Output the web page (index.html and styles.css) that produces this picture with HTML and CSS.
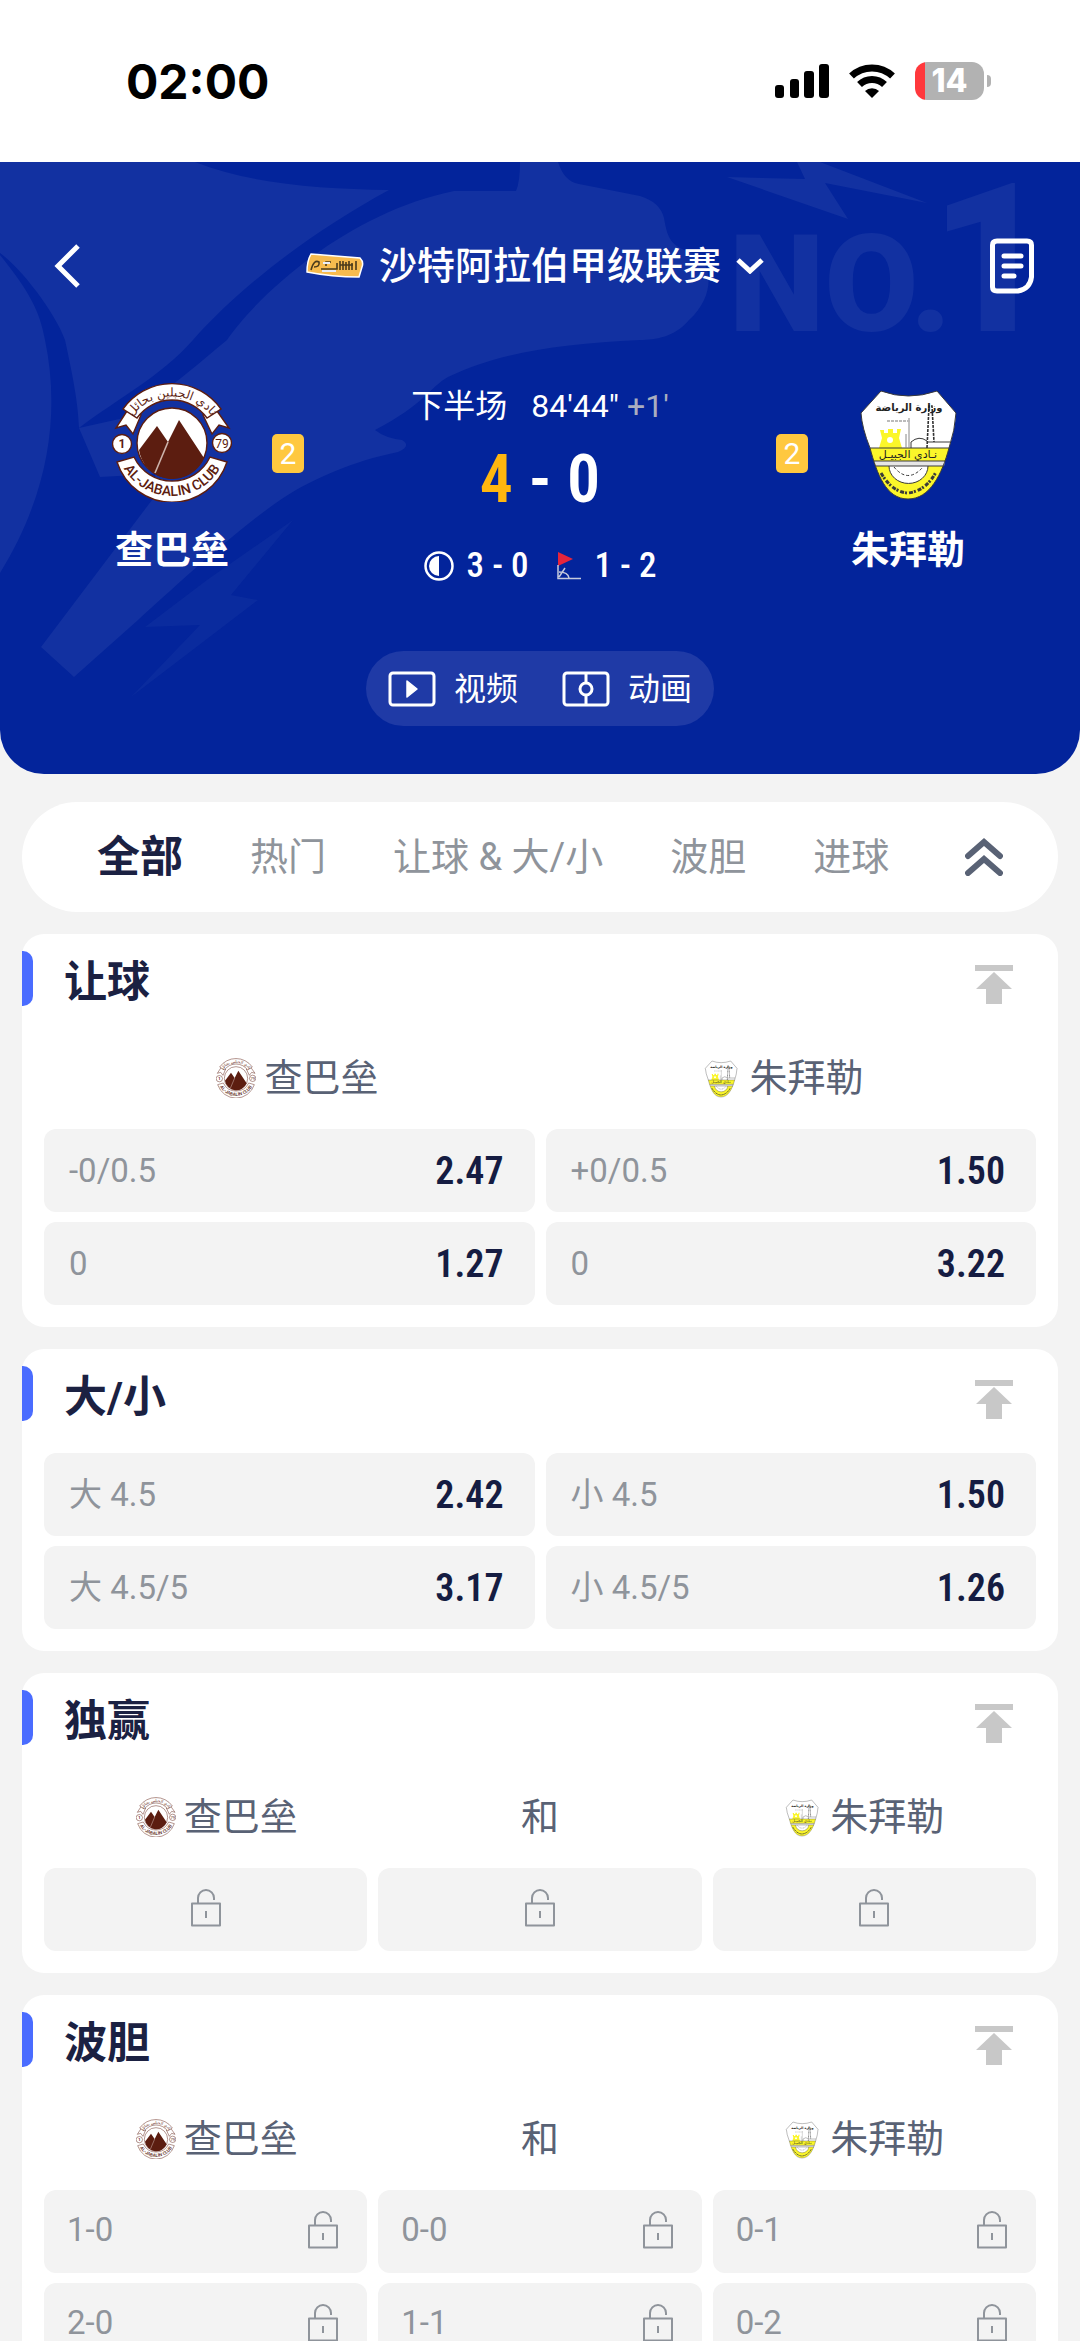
FILE: index.html
```html
<!DOCTYPE html>
<html lang="zh-CN">

<head>
    <meta charset="UTF-8">
    <meta name="viewport" content="width=device-width, initial-scale=1.0">
    <title>沙特阿拉伯甲级联赛</title>
    <link rel="stylesheet" href="styles.css">
</head>

<body>
    <!-- Shared icons -->
    <svg class="sprite" aria-hidden="true">
        <symbol id="logo-home" viewBox="0 0 120 120">
            <path id="home-top" d="M14 45 A50 50 0 0 1 106 45" fill="none" />
            <path id="home-bottom" d="M7 76 A56 56 0 0 0 113 76" fill="none" />
            <g fill="#fff" stroke="#5c1d10" stroke-width="1.4">
                <path d="M15 29 L4 46 L14 43 L21 52 L29 33 Z" />
                <path d="M105 29 L117 46 L107 43 L100 52 L91 33 Z" />
                <path d="M11 27 A60 60 0 0 1 109 27 L95 36 A43 43 0 0 0 25 36 Z" />
                <path d="M5 80 A58 59 0 0 0 115 80 L98 75 A42 42 0 0 1 22 75 Z" />
                <circle cx="10" cy="62" r="9.5" />
                <circle cx="110" cy="61" r="9.5" />
                <circle cx="60" cy="61" r="35" />
            </g>
            <path d="M27 68 L45 44 L56 60 L67 38 L92 76 A34 34 0 0 1 27 68 Z" fill="#5c1d10" />
            <path d="M56 60 L43 91" stroke="#cdb4ac" stroke-width="1.6" />
            <g fill="#5c1d10" font-family="Roboto, sans-serif" text-anchor="middle">
                <text x="10" y="66" font-size="12" font-weight="700">1</text>
                <text x="110" y="66" font-size="12">79</text>
                <text font-size="14" font-weight="500"><textPath href="#home-bottom" startOffset="50%">AL-JABALIN CLUB</textPath></text>
                <text font-size="12" font-family="DejaVu Sans, sans-serif"><textPath href="#home-top" startOffset="50%">نادي الجبلين بحائل</textPath></text>
            </g>
        </symbol>

        <symbol id="logo-away" viewBox="0 0 120 120">
            <path d="M33 9 Q60 19 89 9 L108 31 Q107 48 101 66 H22 Q14 46 13 31 Z" fill="#fff" />
            <path d="M22 66 H101 C94 92 82 117 60 117 C38 117 29 92 22 66 Z" fill="#fbf62a" />
            <path d="M31 66 L34 56 L32 48 H36 V51 H40 V47 H45 V51 H49 V47 H53 L51 56 L54 66 Z" fill="#fbf62a" />
            <circle cx="42" cy="58" r="3" fill="#fff" />
            <path d="M26 79 H97 L96 84 H28 Z" fill="#e6e6e6" />
            <path d="M41 84 A19 17 0 0 0 80 84 Z" fill="#fff" />
            <g fill="none" stroke="#3a3a3a" stroke-width="1">
                <path d="M33 9 Q60 19 89 9 L108 31 Q107 48 101 66 C94 92 82 117 60 117 C38 117 29 92 22 66 Q14 46 13 31 Z" />
                <path d="M22 66 H101 M26 79 H97 M28 84 H96 M80 60 H102 M63 66 V60 Q71 53 79 59 M41 84 A19 17 0 0 0 80 84" />
                <path d="M46 85 Q60 102 75 85" stroke-dasharray="3 2" />
                <path d="M33 91 Q44 110 60 111 Q78 109 88 90" stroke-width="3" stroke-dasharray="4 1 2 2" />
            </g>
            <path d="M79 66 L81 24 L84 24 L86 60" fill="none" stroke="#333" stroke-width="1.6" stroke-dasharray="3 1" />
            <path d="M61 36 V66 M58 52 V66" stroke="#888" stroke-width="1" />
            <path d="M39 39 H62" stroke="#bbb" stroke-width="2" stroke-dasharray="3 1" />
            <g fill="#222" font-family="DejaVu Sans, sans-serif" text-anchor="middle">
                <text x="61" y="29" font-size="10" font-weight="700">وزارة الرياضة</text>
                <text x="60" y="76" font-size="11">نـادي الجبيـل</text>
            </g>
        </symbol>

        <symbol id="icon-top" viewBox="0 0 40 40">
            <path d="M1 1 H39 V7 H1 Z M20 8 L38 25 H28 V40 H12 V25 H2 Z" fill="#c8c8c8" />
        </symbol>

        <symbol id="icon-lock" viewBox="0 0 30 38">
            <path d="M7 14 V9 A8 8 0 0 1 23 9 V11 M1 14.5 H29 V36.5 H1 Z M15 22 V29" fill="none" stroke="#8f949b" stroke-width="2" stroke-linejoin="round" />
        </symbol>
    </svg>

    <div class="app">
        <div class="status-bar">
            <span class="time">02:00</span>
            <div class="status-icons">
                <svg width="54" height="34" viewBox="0 0 54 34">
                    <rect x="0" y="21" width="9" height="13" rx="3" />
                    <rect x="15" y="15" width="9" height="19" rx="3" />
                    <rect x="29" y="7" width="10" height="27" rx="3" />
                    <rect x="44" y="0" width="10" height="34" rx="3" />
                </svg>
                <svg width="46" height="34" viewBox="0 0 46 34">
                    <path d="M2.5 12 A30 30 0 0 1 43.5 12" fill="none" stroke="#000" stroke-width="7" />
                    <path d="M10.5 20.5 A18 18 0 0 1 35.5 20.5" fill="none" stroke="#000" stroke-width="7" />
                    <path d="M23 34 L16 27 A10 10 0 0 1 30 27 Z" />
                </svg>
                <div class="battery">14</div>
            </div>
        </div>

        <header class="match">
            <svg class="match-bg" viewBox="0 0 1080 612" preserveAspectRatio="xMidYMin slice" aria-hidden="true">
                <g fill="#1231a1">
                    <path d="M0 0 H195 C250 22 320 27 389 28 C310 71 240 125 193 178 C160 215 120 235 79 266 C78 240 73 215 65 178 C55 150 20 105 0 91 Z" />
                    <path d="M0 93 C30 130 40 150 45 178 C60 250 50 330 0 411 Z" />
                    <path d="M520 0 H558 C562 12 568 20 579 22 L640 34 Q660 40 664 56 C668 80 672 84 695 92 C714 104 714 135 689 158 C675 175 655 178 640 178 C560 182 500 190 448 215 C430 225 425 242 375 268 Q385 276 402 278 Q412 284 398 290 C350 300 320 315 296 328 C250 355 180 420 138 458 L74 515 L41 485 L158 330 L155 312 L100 315 L79 266 L124 256 C170 228 200 200 227 178 C260 130 350 50 454 29 H516 Q520 20 520 0 Z" />
                    <path d="M797 0 H820 L927 41 L825 21 L848 57 L727 15 L805 17 Z" />
                    <path d="M293 358 L231 433 L258 438 L131 535 L200 463 L145 465 L207 418 Z" opacity="0.5" />
                </g>
                <g class="match-no">
                    <text x="729" y="169" font-size="136">NO.</text>
                    <text x="930" y="169" font-size="208">1</text>
                </g>
            </svg>

            <div class="league-bar">
                <button class="icon-btn" type="button" aria-label="返回">
                    <svg width="26" height="44" viewBox="0 0 26 44">
                        <path d="M24 2 L4 22 L24 42" fill="none" stroke="#fff" stroke-width="5" />
                    </svg>
                </button>
                <button class="league" type="button">
                    <svg width="58" height="26" viewBox="0 0 58 26">
                        <path d="M5 1 L54 5 Q58 9 56 14 L53 24 Q26 24 1 19 Q1 8 5 1 Z" fill="#f7bb4e" stroke="#fff" stroke-width="1.5" />
                        <path d="M5 17 Q8 6 13 9 Q14 14 8 14 M15 16 H31 V10 M25 9 H20 V13 M34 8 V17 M37 8 V17 M40 9 V17 M43 8 V17 M46 10 V17 M50 8 V17 M34 12 H47" fill="none" stroke="#4a3b1c" stroke-width="1.6" />
                        <path d="M17 10 H24 M16 18 H30" stroke="#e9edf8" stroke-width="2" />
                    </svg>
                    <span>沙特阿拉伯甲级联赛</span>
                    <svg width="28" height="16" viewBox="0 0 28 16">
                        <path d="M2 2 L14 13 L26 2" fill="none" stroke="#fff" stroke-width="5" />
                    </svg>
                </button>
                <button class="icon-btn" type="button" aria-label="注单">
                    <svg width="44" height="56" viewBox="0 0 44 56">
                        <path d="M7 3 H37 Q41.5 3 41.5 7 V39 Q40 51 28 53 H7 Q2.5 53 2.5 49 V7 Q2.5 3 7 3 Z" fill="none" stroke="#fff" stroke-width="5" />
                        <path d="M14 18 H31 M14 28 H31 M14 38 H24" stroke="#fff" stroke-width="5" stroke-linecap="round" />
                    </svg>
                </button>
            </div>

            <div class="scoreboard">
                <div class="team">
                    <svg class="team-logo"><use href="#logo-home" /></svg>
                    <span class="team-name">查巴垒</span>
                </div>
                <span class="card-count">2</span>
                <div class="score-info">
                    <div class="clock">
                        <span class="half">下半场</span>
                        <span>84'44"</span>
                        <span class="extra">+1'</span>
                    </div>
                    <div class="score"><span class="leading">4</span><span>-</span><span>0</span></div>
                    <div class="stats">
                        <svg width="30" height="30" viewBox="0 0 30 30">
                            <circle cx="15" cy="15" r="13.5" fill="none" stroke="#fff" stroke-width="2.5" />
                            <path d="M15 5 A10 10 0 0 0 15 25 Z" fill="#fff" />
                        </svg>
                        <span class="stat">3 - 0</span>
                        <svg width="26" height="28" viewBox="0 0 26 28">
                            <path d="M2 0 L17 7 L2 14 Z" fill="#e5253c" />
                            <path d="M2 13 V26.5 H25 M3 20 Q12 20 13 26 M3 25 L9 16" fill="none" stroke="#c5cadd" stroke-width="1.5" />
                        </svg>
                        <span class="stat">1 - 2</span>
                    </div>
                </div>
                <span class="card-count">2</span>
                <div class="team">
                    <svg class="team-logo"><use href="#logo-away" /></svg>
                    <span class="team-name">朱拜勒</span>
                </div>
            </div>

            <div class="media">
                <button type="button">
                    <svg width="48" height="36" viewBox="0 0 48 36">
                        <rect x="2" y="2" width="44" height="32" rx="3" fill="none" stroke="#fff" stroke-width="3" />
                        <path d="M19 10 L29 18 L19 26 Z" fill="#fff" stroke="#fff" stroke-width="1.5" stroke-linejoin="round" />
                    </svg>
                    视频
                </button>
                <button type="button">
                    <svg width="48" height="36" viewBox="0 0 48 36">
                        <rect x="2" y="2" width="44" height="32" rx="3" fill="none" stroke="#fff" stroke-width="3" />
                        <path d="M24 2 V12 M24 24 V34" stroke="#fff" stroke-width="3" />
                        <circle cx="24" cy="18" r="6" fill="none" stroke="#fff" stroke-width="3" />
                    </svg>
                    动画
                </button>
            </div>
        </header>

        <nav class="tabs">
            <button class="tab active" type="button">全部</button>
            <button class="tab" type="button">热门</button>
            <button class="tab" type="button">让球 &amp; 大/小</button>
            <button class="tab" type="button">波胆</button>
            <button class="tab" type="button">进球</button>
            <button class="collapse" type="button" aria-label="收起">
                <svg width="38" height="38" viewBox="0 0 38 38">
                    <path d="M3 18 L19 4 L35 18 M3 35 L19 21 L35 35" fill="none" stroke="#596275" stroke-width="6" stroke-linecap="round" />
                </svg>
            </button>
        </nav>

        <main class="markets">
            <!-- Handicap -->
            <section class="market">
                <div class="market-head">
                    <h2>让球</h2>
                    <button class="pin" type="button" aria-label="置顶"><svg><use href="#icon-top" /></svg></button>
                </div>
                <div class="market-teams">
                    <span><svg><use href="#logo-home" /></svg>查巴垒</span>
                    <span><svg><use href="#logo-away" /></svg>朱拜勒</span>
                </div>
                <div class="odds">
                    <button type="button">-0/0.5 <b>2.47</b></button>
                    <button type="button">+0/0.5 <b>1.50</b></button>
                    <button type="button">0 <b>1.27</b></button>
                    <button type="button">0 <b>3.22</b></button>
                </div>
            </section>

            <!-- Over / under -->
            <section class="market">
                <div class="market-head">
                    <h2>大/小</h2>
                    <button class="pin" type="button" aria-label="置顶"><svg><use href="#icon-top" /></svg></button>
                </div>
                <div class="odds">
                    <button type="button">大 4.5 <b>2.42</b></button>
                    <button type="button">小 4.5 <b>1.50</b></button>
                    <button type="button">大 4.5/5 <b>3.17</b></button>
                    <button type="button">小 4.5/5 <b>1.26</b></button>
                </div>
            </section>

            <!-- Match winner -->
            <section class="market">
                <div class="market-head">
                    <h2>独赢</h2>
                    <button class="pin" type="button" aria-label="置顶"><svg><use href="#icon-top" /></svg></button>
                </div>
                <div class="market-teams">
                    <span><svg><use href="#logo-home" /></svg>查巴垒</span>
                    <span>和</span>
                    <span><svg><use href="#logo-away" /></svg>朱拜勒</span>
                </div>
                <div class="odds three locked only-lock">
                    <button type="button" aria-label="查巴垒"><svg><use href="#icon-lock" /></svg></button>
                    <button type="button" aria-label="和"><svg><use href="#icon-lock" /></svg></button>
                    <button type="button" aria-label="朱拜勒"><svg><use href="#icon-lock" /></svg></button>
                </div>
            </section>

            <!-- Correct score -->
            <section class="market">
                <div class="market-head">
                    <h2>波胆</h2>
                    <button class="pin" type="button" aria-label="置顶"><svg><use href="#icon-top" /></svg></button>
                </div>
                <div class="market-teams">
                    <span><svg><use href="#logo-home" /></svg>查巴垒</span>
                    <span>和</span>
                    <span><svg><use href="#logo-away" /></svg>朱拜勒</span>
                </div>
                <div class="odds three locked">
                    <button type="button">1-0 <svg><use href="#icon-lock" /></svg></button>
                    <button type="button">0-0 <svg><use href="#icon-lock" /></svg></button>
                    <button type="button">0-1 <svg><use href="#icon-lock" /></svg></button>
                    <button type="button">2-0 <svg><use href="#icon-lock" /></svg></button>
                    <button type="button">1-1 <svg><use href="#icon-lock" /></svg></button>
                    <button type="button">0-2 <svg><use href="#icon-lock" /></svg></button>
                </div>
            </section>
        </main>
    </div>
</body>

</html>
```
FILE: styles.css
```css
* {
    box-sizing: border-box;
}

body {
    margin: 0;
    background-color: #f3f3f3;
    font-family: Roboto, "Noto Sans CJK SC", sans-serif;
    color: #1b2142;
}

button {
    border: none;
    background: none;
    padding: 0;
    margin: 0;
    font: inherit;
    color: inherit;
    cursor: pointer;
}

svg {
    display: block;
    flex: none;
}

.sprite {
    display: none;
}

.app {
    height: 100vh;
    overflow: hidden;
}

/* Status bar */
.status-bar {
    display: flex;
    align-items: center;
    justify-content: space-between;
    height: 162px;
    padding: 0 96px 0 126px;
    background-color: #fff;
}

.time {
    font-family: Inter, sans-serif;
    font-size: 48px;
    font-weight: 700;
    color: #000;
}

.status-icons {
    display: flex;
    align-items: center;
    gap: 20px;
}

.battery {
    position: relative;
    width: 69px;
    height: 38px;
    border-radius: 12px;
    background: linear-gradient(to right, #ff383c 10px, #b2b2b2 10px);
    color: #fff;
    font-family: Inter, sans-serif;
    font-size: 32px;
    font-weight: 800;
    line-height: 38px;
    text-align: center;
}

.battery::after {
    content: "";
    position: absolute;
    top: 13px;
    right: -7px;
    width: 4px;
    height: 12px;
    border-radius: 0 6px 6px 0;
    background-color: #b2b2b2;
}

/* Match header */
.match {
    position: relative;
    padding: 72px 0 48px;
    border-radius: 0 0 44px 44px;
    background-color: #03249b;
    color: #fff;
    overflow: hidden;
}

.match > div {
    position: relative;
}

.match-bg {
    position: absolute;
    top: 0;
    left: 0;
    width: 100%;
    height: 100%;
}

.match-no {
    fill: #1231a1;
    font-family: Roboto, sans-serif;
    font-weight: 900;
}

.league-bar {
    display: flex;
    align-items: center;
    justify-content: space-between;
    height: 64px;
    padding: 0 46px 0 54px;
}

.league {
    display: flex;
    align-items: center;
    gap: 15px;
    font-size: 38px;
    font-weight: 500;
    line-height: 56px;
}

.scoreboard {
    display: flex;
    align-items: flex-start;
    gap: 10px;
    padding: 84px 82px 0;
}

.team {
    display: flex;
    flex-direction: column;
    align-items: center;
    gap: 20px;
    width: 180px;
}

.team-logo {
    width: 120px;
    height: 120px;
}

.team-name {
    font-size: 38px;
    font-weight: 700;
    line-height: 56px;
}

.card-count {
    width: 32px;
    height: 39px;
    margin-top: 52px;
    border-radius: 5px;
    background-color: #ffc83f;
    font-size: 30px;
    line-height: 39px;
    text-align: center;
}

.score-info {
    flex: 1;
    display: flex;
    flex-direction: column;
    align-items: center;
}

.clock {
    display: flex;
    align-items: center;
    gap: 8px;
    font-size: 32px;
    line-height: 48px;
}

.clock .half {
    margin-right: 16px;
}

.clock .extra {
    color: #a9adbf;
}

.score {
    display: flex;
    gap: 16px;
    margin-top: 10px;
    font-family: "Roboto Condensed", Roboto, sans-serif;
    font-size: 66px;
    font-weight: 600;
    line-height: 80px;
}

.score .leading {
    color: #ffb60f;
}

.stats {
    display: flex;
    align-items: center;
    gap: 13px;
    margin-top: 24px;
}

.stat {
    margin-right: 14px;
    font-family: "Roboto Condensed", Roboto, sans-serif;
    font-size: 35px;
    font-weight: 500;
    line-height: 44px;
}

.stat:last-child {
    margin-right: 0;
}

.media {
    display: flex;
    gap: 44px;
    width: max-content;
    margin: 63px auto 0;
    padding: 0 22px;
    border-radius: 38px;
    background-color: #1f3aa6;
}

.media button {
    display: flex;
    align-items: center;
    gap: 18px;
    height: 75px;
    font-size: 32px;
    line-height: 48px;
}

/* Category tabs */
.tabs {
    display: flex;
    align-items: center;
    gap: 67px;
    height: 110px;
    margin: 28px 22px 22px;
    padding: 0 55px 0 75px;
    border-radius: 55px;
    background-color: #fff;
}

.tab {
    color: #8f949b;
    font-size: 38px;
    line-height: 56px;
    white-space: nowrap;
}

.tab.active {
    color: #1b2142;
    font-size: 43px;
    font-weight: 700;
}

.collapse {
    margin-left: auto;
}

/* Market cards */
.market {
    margin: 0 22px 22px;
    padding-bottom: 22px;
    border-radius: 22px;
    background-color: #fff;
}

.market-head {
    display: flex;
    align-items: center;
    justify-content: space-between;
    height: 88px;
    margin-bottom: 16px;
    padding-right: 44px;
}

.market-head h2 {
    display: flex;
    align-items: center;
    gap: 31px;
    margin: 0;
    font-size: 43px;
    font-weight: 700;
}

.market-head h2::before {
    content: "";
    width: 11px;
    height: 55px;
    border-radius: 0 10px 10px 0;
    background-color: #4a6cff;
}

.pin {
    margin-top: 12px;
}

.pin svg {
    width: 40px;
    height: 40px;
}

.market-teams {
    display: flex;
    height: 80px;
    margin-bottom: 11px;
    padding: 0 33px;
    color: #596275;
    font-size: 38px;
    line-height: 56px;
}

.market-teams span {
    flex: 1;
    display: flex;
    align-items: center;
    justify-content: center;
    gap: 8px;
}

.market-teams svg {
    width: 40px;
    height: 40px;
}

.odds {
    display: grid;
    grid-template-columns: repeat(2, 1fr);
    gap: 10px 11px;
    padding: 0 22px;
}

.odds.three {
    grid-template-columns: repeat(3, 1fr);
}

.odds button {
    display: flex;
    align-items: center;
    justify-content: space-between;
    height: 83px;
    padding: 0 31px 0 25px;
    border-radius: 12px;
    background-color: #f3f3f3;
    color: #8f949b;
    font-size: 33px;
    line-height: 48px;
}

.odds b {
    color: #151c42;
    font-family: "Roboto Condensed", Roboto, sans-serif;
    font-size: 38px;
    font-weight: 600;
}

.odds.locked button {
    padding: 0 29px 4px 23px;
}

.odds.only-lock button {
    justify-content: center;
    padding: 0 0 4px;
}

.odds svg {
    width: 30px;
    height: 38px;
}
```
